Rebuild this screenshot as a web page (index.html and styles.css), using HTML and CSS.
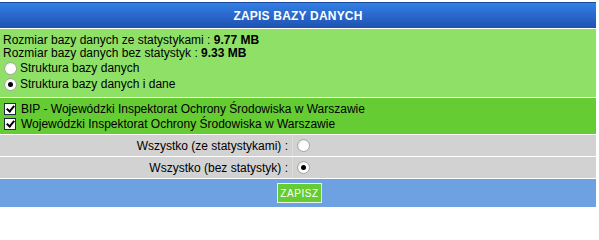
FILE: index.html
```html
<!DOCTYPE html>
<html lang="pl">
<head>
<meta charset="utf-8">
<title>Zapis bazy danych</title>
<link rel="stylesheet" href="styles.css">
</head>
<body>
<form class="panel">
  <div class="head">ZAPIS BAZY DANYCH</div>
  <div class="info">
    <div class="line">Rozmiar bazy danych ze statystykami : <b>9.77 MB</b></div>
    <div class="line">Rozmiar bazy danych bez statystyk : <b>9.33 MB</b></div>
    <label class="opt"><input type="radio" name="typ" class="rad"> Struktura bazy danych</label>
    <label class="opt"><input type="radio" name="typ" class="rad" checked> Struktura bazy danych i dane</label>
  </div>
  <div class="sites">
    <label class="chk"><input type="checkbox" class="box" checked>BIP - Wojewódzki Inspektorat Ochrony Środowiska w Warszawie</label>
    <label class="chk"><input type="checkbox" class="box" checked>Wojewódzki Inspektorat Ochrony Środowiska w Warszawie</label>
  </div>
  <div class="pick">
    <div class="lbl">Wszystko (ze statystykami) :</div>
    <div class="val"><input type="radio" name="all" class="rad"></div>
  </div>
  <div class="pick">
    <div class="lbl">Wszystko (bez statystyk) :</div>
    <div class="val"><input type="radio" name="all" class="rad" checked></div>
  </div>
  <div class="foot"><button type="button" class="btn">ZAPISZ</button></div>
</form>
</body>
</html>
```

FILE: styles.css
```css
html, body {
  margin: 0;
  padding: 0;
  background: #ffffff;
}
body {
  font-family: "Liberation Sans", Arial, sans-serif;
  font-size: 12px;
  color: #000000;
}
.panel {
  width: 596px;
  margin-top: 2px;
  display: flex;
  flex-direction: column;
  gap: 1px;
  background: #ffffff;
}
.head {
  height: 25px;
  border-top: 1px solid #1d4aa0;
  background: linear-gradient(#3380e3, #2a6ad0 45%, #1f52b0);
  color: #ffffff;
  font-weight: bold;
  font-size: 12px;
  display: flex;
  align-items: center;
  justify-content: center;
  letter-spacing: 0.2px;
}
.info {
  background: #8fe067;
  height: 68px;
  box-sizing: border-box;
  padding: 5px 0 0 3px;
  display: flex;
  flex-direction: column;
}
.line {
  line-height: 13px;
}
.opt {
  height: 16px;
  display: flex;
  align-items: center;
}
.rad {
  appearance: none;
  -webkit-appearance: none;
  width: 13px;
  height: 13px;
  margin: 0 3px 0 1px;
  border-radius: 50%;
  box-sizing: border-box;
  border: 1px solid #a8a8a0;
  background: radial-gradient(circle at 60% 60%, #ffffff 0, #ffffff 45%, #e6e6e0 80%, #c8c8c0 100%);
  position: relative;
  flex: none;
}
.rad:checked::after {
  content: "";
  position: absolute;
  left: 3px;
  top: 3px;
  width: 5px;
  height: 5px;
  border-radius: 50%;
  background: #000000;
}
.sites {
  background: #66cc33;
  height: 36px;
  box-sizing: border-box;
  padding: 3px 0 0 4px;
  display: flex;
  flex-direction: column;
}
.chk {
  height: 15px;
  display: flex;
  align-items: center;
}
.box {
  appearance: none;
  -webkit-appearance: none;
  width: 12px;
  height: 12px;
  margin: 0 5px 0 0;
  box-sizing: border-box;
  border: 1px solid #1c2c3c;
  background: #ffffff;
  position: relative;
  flex: none;
}
.box:checked::after {
  content: "";
  position: absolute;
  left: 3px;
  top: 0px;
  width: 3px;
  height: 6px;
  border-right: 2px solid #000000;
  border-bottom: 2px solid #000000;
  transform: rotate(40deg);
}
.pick {
  background: #d2d2d2;
  height: 21px;
  display: grid;
  grid-template-columns: 293px 1fr;
}
.lbl {
  text-align: right;
  padding-right: 4px;
  display: flex;
  align-items: center;
  justify-content: flex-end;
  border-right: 1px solid #dcdcdc;
}
.val {
  display: flex;
  align-items: center;
  padding-left: 3px;
}
.foot {
  background: #6da1e2;
  height: 28px;
  box-sizing: border-box;
  padding-top: 4px;
  display: flex;
  justify-content: center;
  align-items: flex-start;
}
.btn {
  width: 45px;
  height: 20px;
  background: #66cc33;
  border: 1px solid #e8f4e0;
  color: #ffffff;
  font-family: "Liberation Sans", Arial, sans-serif;
  font-size: 10px;
  letter-spacing: 0.6px;
  padding: 0;
  margin-left: 3px;
}
```
